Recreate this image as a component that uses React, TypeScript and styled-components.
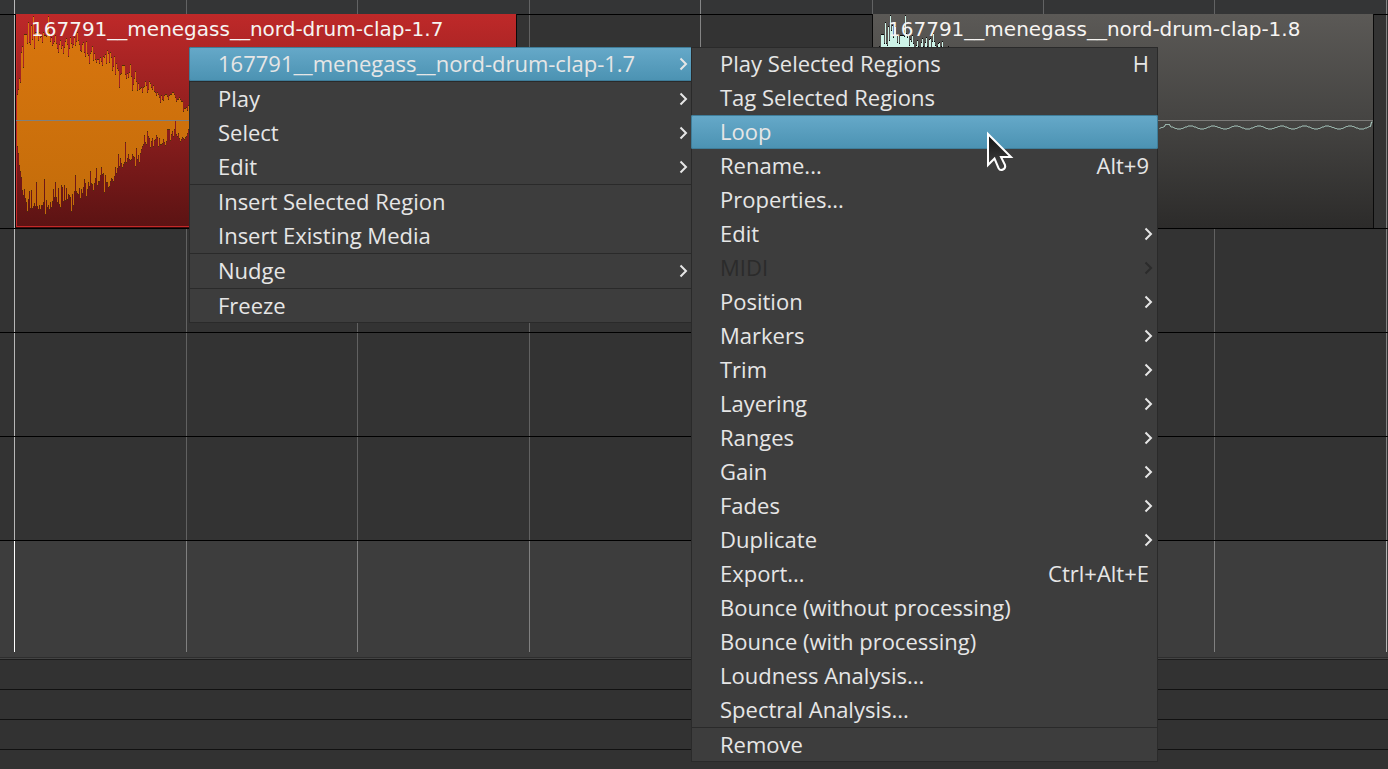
import React from 'react';
import styled, { createGlobalStyle, css } from 'styled-components';

const GlobalStyle = createGlobalStyle`
  *, *::before, *::after { box-sizing: border-box; }
  body {
    margin: 0;
    background: #333333;
    overflow: hidden;
  }
`;

/* ---------- editor canvas ---------- */

const Editor = styled.main`
  position: relative;
  display: flex;
  flex-direction: column;
  min-height: 100vh;
  background: #333333;
  overflow: hidden;
`;

const Arrangement = styled.section`
  position: relative;
  z-index: 0;
  flex: 1;
  display: flex;
  flex-direction: column;
  background: #3d3d3d;
`;

const BeatGrid = styled.div`
  position: absolute;
  z-index: -1;
  inset: 0 0 5px 0;
  display: flex;
  padding-left: 14px;
  overflow: hidden;
`;

const Beat = styled.div<{ $width: number; $line: string }>`
  flex: none;
  width: ${({ $width }) => $width}px;
  border-left: 1px solid ${({ $line }) => $line};
`;

const Ruler = styled.div`
  height: 14px;
  background: rgba(34, 36, 40, 0.32);
`;

const Track = styled.div<{ $height: number }>`
  position: relative;
  height: ${({ $height }) => $height}px;
  border-top: 1px solid #000;
  background: rgba(30, 30, 30, 0.32);
`;

const EmptyArea = styled.div`
  flex: 1;
  border-top: 1px solid #000;
`;

const Summary = styled.footer`
  padding-top: 1px;
  border-top: 1px solid #2e2e2e;
  background: #444444;
`;

const SummaryRow = styled.div`
  height: 30px;
  border-top: 1px solid #111111;
  background: #323232;

  &:first-child { border-top-color: #1c1c1c; }
  &:last-child { height: 20px; }
`;

/* ---------- regions ---------- */

const Region = styled.article<{ $left: number; $selected?: boolean }>`
  position: absolute;
  top: -1px;
  left: ${({ $left }) => $left}px;
  width: 502px;
  height: 214px;
  overflow: hidden;
  border: 1px solid #0a0a0a;
  border-top: 0;
  border-bottom: 0;
  background: linear-gradient(#5b5956, #454442 50%, #2c2b2a);

  ${({ $selected }) =>
    $selected &&
    css`
      border-bottom: 1px solid #3a0c0c;
      background: linear-gradient(#be2929, #8e1e1e 50%, #5b1313);
      box-shadow: inset 1px -1px 0 #c42828;
    `}
`;

const RegionName = styled.h2`
  position: relative;
  margin: 0;
  padding: 3px 0 0 15px;
  font: 400 20px/24px 'DejaVu Sans', sans-serif;
  color: #f6f4f2;
  white-space: nowrap;
`;

const Waveform = styled.svg`
  position: absolute;
  top: 0;
  left: 0;
  width: 500px;
  height: 212px;
`;

/* ---------- menus ---------- */

const Menu = styled.div<{ $left: number; $width: number }>`
  position: absolute;
  top: 47px;
  left: ${({ $left }) => $left}px;
  width: ${({ $width }) => $width}px;
  display: flex;
  flex-direction: column;
  background: #3d3d3d;
  box-shadow: inset 0 0 0 1px #2a2a2a;
`;

const MenuItem = styled.button<{ $active?: boolean; $arrow?: boolean }>`
  display: flex;
  align-items: center;
  justify-content: space-between;
  height: 34px;
  margin: 0;
  padding: 0 ${({ $arrow }) => ($arrow ? 5 : 9)}px 0 29px;
  border: 0;
  border-radius: 2px;
  background: transparent;
  color: #e6e6e6;
  font: 400 22px/32px 'Open Sans', 'Noto Sans', sans-serif;
  text-align: left;
  white-space: nowrap;

  &:disabled { color: #2b2b2b; }

  ${({ $active }) =>
    $active &&
    css`
      background: linear-gradient(#66a9c9, #4b92b2);
      box-shadow: inset 0 0 0 1px #3f7d99;
    `}
`;

const ItemText = styled.span`
  padding-bottom: 2px;
`;

const Separator = styled.hr`
  width: 100%;
  height: 1px;
  margin: 0;
  border: 0;
  background: #2a2a2a;
`;

const Arrow = styled.svg`
  flex: none;
  width: 9px;
  height: 14px;
  fill: none;
  stroke: currentColor;
  stroke-width: 2;
`;

const Pointer = styled.svg`
  position: absolute;
  top: 128px;
  left: 984px;
  width: 34px;
  height: 46px;
  pointer-events: none;
`;

/* ---------- data ---------- */

const BEATS: [number, string][] = [
  [172, '#ffffff'],
  [171, '#808080'],
  [172, '#808080'],
  [171, '#808080'],
  [172, '#b4b4b4'],
  [171, '#808080'],
  [171, '#808080'],
  [172, '#808080'],
  [172, '#b4b4b4'],
];

// Peaks are kept in thirds of a pixel, one value per pixel column.
const CLAP_UPPER = [
  247, 232, 199, 211, 121, 103, 166, 67, 65, 67, 94, 31, 91, 97, 40, 82, 13, 109, 60, 60, 62, 85, 60, 76, 72, 91,
  60, 70, 70, 72, 60, 13, 60, 88, 76, 100, 94, 88, 70, 94, 109, 121, 97, 85, 109, 100, 124, 106, 88, 79, 97, 133,
  109, 76, 94, 106, 97, 76, 100, 88, 61, 85, 97, 115, 118, 97, 91, 121, 133, 88, 124, 130, 154, 124, 118, 103, 145,
  124, 142, 151, 142, 142, 154, 136, 148, 160, 133, 136, 127, 154, 115, 124, 151, 121, 136, 175, 163, 133, 187, 154,
  169, 175, 226, 187, 184, 160, 160, 160, 187, 199, 184, 196, 181, 157, 193, 235, 217, 199, 178, 208, 235, 214, 232,
  229, 226, 241, 226, 223, 208, 220, 241, 232, 208, 214, 226, 232, 220, 238, 241, 250, 241, 247, 256, 271, 250, 262,
  265, 250, 247, 247, 253, 262, 250, 247, 247, 241, 241, 247, 256, 268, 262, 262, 256, 262, 268, 268, 298, 289, 289,
  286, 295, 280,
].map((v) => v / 3 - 2);

const CLAP_LOWER = [
  82, 103, 139, 157, 175, 214, 229, 211, 238, 250, 277, 241, 217, 268, 214, 268, 262, 253, 262, 190, 262, 271, 259,
  271, 259, 259, 250, 181, 285, 244, 265, 259, 271, 250, 265, 247, 211, 235, 190, 235, 250, 208, 256, 265, 199, 205,
  247, 199, 244, 208, 241, 226, 229, 235, 277, 226, 259, 217, 169, 217, 223, 226, 208, 238, 211, 223, 205, 181, 193,
  232, 211, 190, 202, 157, 193, 196, 214, 193, 178, 148, 199, 187, 187, 169, 145, 166, 163, 220, 169, 190, 190, 205,
  202, 187, 178, 181, 187, 172, 145, 163, 148, 106, 142, 118, 133, 145, 136, 130, 70, 130, 118, 106, 121, 124, 121,
  106, 112, 115, 142, 88, 121, 109, 130, 103, 91, 82, 76, 49, 70, 76, 37, 52, 58, 85, 67, 58, 82, 64, 61, 49, 55,
  82, 58, 76, 76, 73, 61, 70, 79, 67, 31, 31, 31, 64, 46, 37, 52, 31, 4, 46, 52, 43, 58, 67, 61, 55, 58, 61, 55, 52,
  43, 31,
].map((v) => v / 3 + 106);

const ATTACK_PEAKS = [
  138, 144, 102, 102, 102, 130, 67, 130, 134, 78, 120, 46, 90, 75, 110, 95, 78, 105, 125, 105, 128, 106, 105, 105,
  105, 108, 46, 100, 110, 105, 135, 118, 122, 106, 130, 144, 144, 135, 121, 138, 144, 144, 125, 115, 138, 144, 125,
  111, 138, 144, 118, 115, 140, 122, 98, 122, 135, 144, 138, 130, 127, 144, 138, 123, 144, 144, 144, 144, 144, 138,
].map((v) => v / 3 - 14);

const column = (x: number, top: number, bottom: number) =>
  `M${x} ${Math.round(top)}h1V${Math.round(bottom)}h-1z`;

const CLAP_BODY = CLAP_UPPER.map((top, i) => column(i + 1, top, CLAP_LOWER[i])).join('');
const CLAP_TIPS = CLAP_UPPER.map(
  (top, i) => column(i + 1, top, top + 1) + column(i + 1, CLAP_LOWER[i] - 1, CLAP_LOWER[i]),
).join('');
const ATTACK_BODY = ATTACK_PEAKS.map((top, i) => column(i + 6, top, 106)).join('');
const ATTACK_TIPS = ATTACK_PEAKS.map((top, i) => column(i + 6, top, top + 1)).join('');

const TAIL_POINTS = Array.from({ length: 214 }, (_, i) => {
  const swell = 113.5 - 1.5 * Math.cos(((i - 31) / 22.8) * Math.PI * 2);
  const y = i > 5 && i < 11 ? 110.5 : i > 211 ? 108 : swell;
  return `${i + 286.5},${Math.round(y * 2) / 2}`;
}).join(' ');

type Entry = {
  label: string;
  arrow?: boolean;
  keys?: string;
  active?: boolean;
  disabled?: boolean;
  divided?: boolean;
};

const TRACK_MENU: Entry[] = [
  { label: '167791__menegass__nord-drum-clap-1.7', arrow: true, active: true },
  { label: 'Play', arrow: true, divided: true },
  { label: 'Select', arrow: true },
  { label: 'Edit', arrow: true },
  { label: 'Insert Selected Region', divided: true },
  { label: 'Insert Existing Media' },
  { label: 'Nudge', arrow: true, divided: true },
  { label: 'Freeze', divided: true },
];

const REGION_MENU: Entry[] = [
  { label: 'Play Selected Regions', keys: 'H' },
  { label: 'Tag Selected Regions' },
  { label: 'Loop', active: true },
  { label: 'Rename...', keys: 'Alt+9' },
  { label: 'Properties...' },
  { label: 'Edit', arrow: true },
  { label: 'MIDI', arrow: true, disabled: true },
  { label: 'Position', arrow: true },
  { label: 'Markers', arrow: true },
  { label: 'Trim', arrow: true },
  { label: 'Layering', arrow: true },
  { label: 'Ranges', arrow: true },
  { label: 'Gain', arrow: true },
  { label: 'Fades', arrow: true },
  { label: 'Duplicate', arrow: true },
  { label: 'Export...', keys: 'Ctrl+Alt+E' },
  { label: 'Bounce (without processing)' },
  { label: 'Bounce (with processing)' },
  { label: 'Loudness Analysis...' },
  { label: 'Spectral Analysis...' },
  { label: 'Remove', divided: true },
];

function PopupMenu({ left, width, entries, name }: { left: number; width: number; entries: Entry[]; name: string }) {
  return (
    <Menu $left={left} $width={width} role="menu" aria-label={name}>
      {entries.map((e) => (
        <React.Fragment key={e.label}>
          {e.divided && <Separator />}
          <MenuItem
            type="button"
            role="menuitem"
            $active={e.active}
            $arrow={e.arrow}
            disabled={e.disabled}
            aria-haspopup={e.arrow ? 'menu' : undefined}
          >
            <ItemText>{e.label}</ItemText>
            {e.keys && <ItemText>{e.keys}</ItemText>}
            {e.arrow && (
              <Arrow viewBox="0 0 9 14" aria-hidden="true">
                <path d="M1.500 1.500 7 7l-5.500 5.500" />
              </Arrow>
            )}
          </MenuItem>
        </React.Fragment>
      ))}
    </Menu>
  );
}

export default function App() {
  return (
    <>
      <GlobalStyle />
      <Editor>
        <Arrangement>
          <BeatGrid aria-hidden="true">
            {BEATS.map(([width, line], i) => (
              <Beat key={i} $width={width} $line={line} />
            ))}
          </BeatGrid>
          <Ruler />
          <Track $height={214}>
            <Region $left={15} $selected>
              <Waveform viewBox="0 0 500 212" shapeRendering="crispEdges" aria-hidden="true">
                <defs>
                  <linearGradient id="clap" x1="0" y1="0" x2="0" y2="212" gradientUnits="userSpaceOnUse">
                    <stop offset="0" stopColor="#da760e" />
                    <stop offset="1" stopColor="#c26c0a" />
                  </linearGradient>
                </defs>
                <path d={CLAP_BODY} fill="url(#clap)" />
                <path d={CLAP_TIPS} fill="#3a2408" fillOpacity="0.85" />
                <path d="M0 106h500v1H0z" fill="#80807c" />
              </Waveform>
              <RegionName>167791__menegass__nord-drum-clap-1.7</RegionName>
            </Region>
            <Region $left={872}>
              <Waveform viewBox="0 0 500 212" shapeRendering="crispEdges" aria-hidden="true">
                <path d={ATTACK_BODY} fill="#cdf3e8" />
                <path d={ATTACK_TIPS} fill="#0c0c0c" />
                <path d="M0 106h500v1H0z" fill="#7c7b79" />
                <polyline points={TAIL_POINTS} fill="none" stroke="#b4d8cd" shapeRendering="auto" />
              </Waveform>
              <RegionName>167791__menegass__nord-drum-clap-1.8</RegionName>
            </Region>
          </Track>
          <Track $height={104} />
          <Track $height={104} />
          <Track $height={104} />
          <EmptyArea />
        </Arrangement>
        <Summary>
          <SummaryRow />
          <SummaryRow />
          <SummaryRow />
          <SummaryRow />
        </Summary>

        <PopupMenu name="Track" left={189} width={504} entries={TRACK_MENU} />
        <PopupMenu name="Region" left={691} width={467} entries={REGION_MENU} />

        <Pointer viewBox="0 0 34 46" aria-hidden="true">
          <defs>
            <linearGradient id="pointer" x1="0" y1="0" x2="0" y2="1">
              <stop offset="0" stopColor="#111111" />
              <stop offset="1" stopColor="#454545" />
            </linearGradient>
          </defs>
          <path
            d="M4 6V37l6.500-6.500 4 9.500q1.500 3 4.500 1.500t2-4.500l-4-8H27z"
            fill="url(#pointer)"
            stroke="#ffffff"
            strokeWidth="2"
          />
        </Pointer>
      </Editor>
    </>
  );
}
